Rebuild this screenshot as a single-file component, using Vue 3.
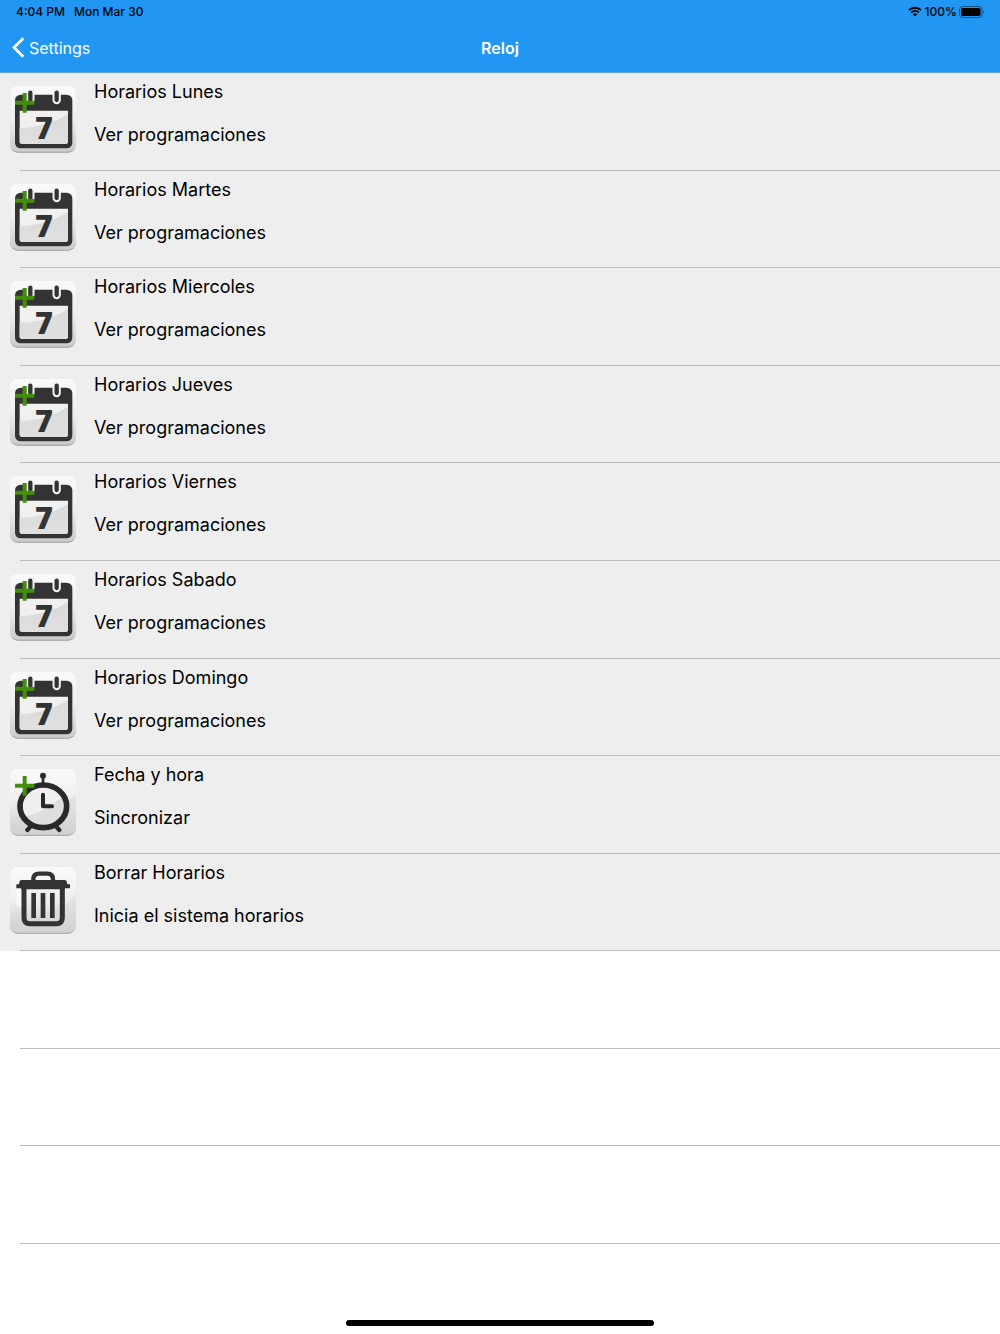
<script setup>
import { ref } from 'vue';

const days = ['Lunes', 'Martes', 'Miercoles', 'Jueves', 'Viernes', 'Sabado', 'Domingo'];

const items = ref([
  ...days.map((day) => ({
    icon: 'calendar',
    title: `Horarios ${day}`,
    detail: 'Ver programaciones',
  })),
  { icon: 'clock', title: 'Fecha y hora', detail: 'Sincronizar' },
  { icon: 'trash', title: 'Borrar Horarios', detail: 'Inicia el sistema horarios' },
]);

const emptyRows = 3;
</script>

<template>
  <div class="screen">
    <header class="header">
      <div class="status">
        <span>4:04 PM</span>
        <span>Mon Mar 30</span>
        <svg class="wifi" viewBox="0 0 14 11" width="14" height="11">
          <path d="M1 4.2 A8.6 8.6 0 0 1 13 4.2" />
          <path d="M3.2 6.5 A5.4 5.4 0 0 1 10.8 6.5" />
          <path class="dot" d="M4.9 8.3 A3 3 0 0 1 9.1 8.3 L7 10.5 Z" />
        </svg>
        <span class="percent">100%</span>
        <svg class="battery" viewBox="0 0 26 12" width="26" height="12">
          <rect class="shell" x="0.5" y="0.5" width="22.5" height="11" rx="3" />
          <rect x="2" y="2" width="19.5" height="8" rx="1.6" />
          <path class="tip" d="M24.2 4 Q26 6 24.2 8 Z" />
        </svg>
      </div>
      <nav class="navbar">
        <button class="back" type="button">
          <svg viewBox="0 0 13 21" width="13" height="21">
            <path d="M11.3 1.2 L2 10.5 L11.3 19.8" />
          </svg>
          <span>Settings</span>
        </button>
        <h1 class="title">Reloj</h1>
      </nav>
    </header>

    <svg class="defs" width="0" height="0" aria-hidden="true">
      <defs>
        <linearGradient id="tile" x1="0" y1="0" x2="0" y2="1">
          <stop offset="0" stop-color="#fafafa" />
          <stop offset="0.5" stop-color="#eeeeee" />
          <stop offset="1" stop-color="#cbcbcb" />
        </linearGradient>
        <linearGradient id="shine" x1="0" y1="0" x2="0" y2="1">
          <stop offset="0" stop-color="#dadada" />
          <stop offset="1" stop-color="#e0e0e0" />
        </linearGradient>
      </defs>
    </svg>

    <ul class="list">
      <li v-for="item in items" :key="item.title" class="row filled">
        <button class="cell" type="button">
          <svg class="icon" viewBox="0 0 198 201" width="66" height="67" aria-hidden="true">
            <rect x="1" y="4" width="196" height="196" rx="22" fill="#9b9b9b" />
            <rect x="0" y="0" width="198" height="197" rx="22" fill="url(#tile)" />

            <g v-if="item.icon === 'calendar'">
              <rect x="15" y="26" width="172" height="161" rx="17" fill="#333" />
              <path d="M29 74 H174 V166 Q174 174 166 174 H37 Q29 174 29 166 Z" fill="#f0f0f0" />
              <path d="M29 126 Q112 124 174 84 V166 Q174 174 166 174 H37 Q29 174 29 166 Z" fill="url(#shine)" />
              <path class="ring-edge" d="M61 20 V42 M140 20 V42" />
              <path class="ring" d="M61 20 V42 M140 20 V42" />
              <text class="seven" x="102" y="160" text-anchor="middle">7</text>
            </g>

            <g v-else-if="item.icon === 'clock'">
              <path d="M172 95 L198 78 V175 Q198 197 176 197 H22 Q0 197 0 175 V150 Z" fill="#d8d8d8" opacity="0.5" />
              <path class="leg" d="M62 172 L52 183 M138 172 L148 183" />
              <path class="stem" d="M99 46 V20" />
              <circle cx="99" cy="20" r="9" fill="#292929" />
              <ellipse cx="100" cy="112" rx="70" ry="64" fill="#efefef" />
              <path d="M38 142 Q110 134 160 78 A70 64 0 0 1 100 176 Q58 176 38 142 Z" fill="#dedede" />
              <ellipse class="dial" cx="100" cy="112" rx="70" ry="64" />
              <path class="hands" d="M99 77 V112 H126" />
            </g>

            <g v-else>
              <path d="M165 112 Q192 95 198 75 V175 Q198 197 176 197 H22 Q0 197 0 175 V160 Q100 150 165 112 Z" fill="#d8d8d8" opacity="0.5" />
              <path d="M18 66 V108 Q20 122 36 122 V66 Z" fill="#fff" opacity="0.6" />
              <path class="can" d="M42 58 V152 Q42 170 60 170 H139 Q157 170 157 152 V58" />
              <path class="handle" d="M70 42 V37 Q70 20 87 20 H112 Q129 20 129 37 V42" />
              <path d="M35 39 H164 Q171 39 172 52 H180 V64 H165 V67 H33 V64 H19 V52 H27 Q28 39 35 39 Z" fill="#333" />
              <path class="bars" d="M71 78 V153 M99 78 V153 M127 78 V153" />
            </g>

            <path v-if="item.icon !== 'trash'" class="plus" d="M15 50 H73 M44 21 V80" />
          </svg>
          <span class="texts">
            <span>{{ item.title }}</span>
            <span>{{ item.detail }}</span>
          </span>
        </button>
      </li>
      <li v-for="n in emptyRows" :key="n" class="row"></li>
    </ul>

    <div class="home"></div>
  </div>
</template>

<style>
body {
  margin: 0;
  background: #fff;
}
</style>

<style scoped>
.screen {
  display: flex;
  flex-direction: column;
  min-height: 100vh;
  font-family: Inter, "Liberation Sans", sans-serif;
  color: #000;
}

.header {
  display: flex;
  flex-direction: column;
  height: 73px;
  box-sizing: border-box;
  background: #2196f3;
  border-bottom: 1px solid #5ea5dc;
}

.status {
  display: flex;
  align-items: center;
  height: 23px;
  padding: 0 15px 0 16px;
  font-size: 12px;
  font-weight: 500;
}

.status span:nth-child(2) {
  margin-left: 9px;
}

.wifi {
  margin-left: auto;
  fill: none;
  stroke: #000;
  stroke-width: 1.8;
}

.wifi .dot {
  fill: #000;
  stroke: none;
}

.status .percent {
  margin: 0 2px 0 3px;
}

.shell {
  fill: none;
  stroke: #000;
  stroke-opacity: 0.45;
}

.tip {
  fill-opacity: 0.5;
}

.navbar {
  display: grid;
  grid-template-columns: 1fr auto 1fr;
  align-items: center;
  flex: 1;
  color: #fff;
}

.back {
  display: flex;
  align-items: center;
  gap: 4px;
  justify-self: start;
  padding: 0 0 0 12px;
  border: 0;
  background: none;
  color: inherit;
  font: inherit;
  font-size: 16px;
}

.back path {
  fill: none;
  stroke: #fff;
  stroke-width: 2.8;
}

.title {
  margin: 0;
  font-size: 16px;
  font-weight: 600;
}

.defs {
  display: block;
}

.list {
  display: grid;
  grid-auto-rows: 1fr;
  flex: 1;
  margin: 0;
  padding: 0;
  list-style: none;
}

.row {
  background: linear-gradient(#bcbcbc, #bcbcbc) right bottom / calc(100% - 20px) 1px no-repeat;
}

.filled {
  background-color: #eee;
}

.cell {
  display: flex;
  align-items: flex-start;
  gap: 18px;
  width: 100%;
  padding: 0 10px;
  border: 0;
  background: none;
  color: inherit;
  font: inherit;
  text-align: left;
}

.icon {
  flex: none;
  margin-top: 13px;
}

.texts {
  display: flex;
  flex-direction: column;
  gap: 19px;
  padding-top: 7px;
  font-size: 18px;
  line-height: 24px;
}

.ring-edge,
.ring {
  fill: none;
  stroke: #f5f5f5;
  stroke-width: 25;
  stroke-linecap: round;
}

.ring {
  stroke: #333;
  stroke-width: 13;
}

.seven {
  fill: #333;
  font-family: "Open Sans", sans-serif;
  font-size: 92px;
  font-weight: 800;
}

.plus {
  stroke: #438f0b;
  stroke-width: 12;
}

.dial {
  fill: none;
  stroke: #292929;
  stroke-width: 17;
}

.leg {
  stroke: #292929;
  stroke-width: 13;
  stroke-linecap: round;
}

.stem {
  stroke: #292929;
  stroke-width: 8;
}

.hands {
  fill: none;
  stroke: #292929;
  stroke-width: 12;
  stroke-linecap: round;
  stroke-linejoin: round;
}

.can,
.handle {
  fill: none;
  stroke: #333;
  stroke-width: 15;
}

.handle {
  stroke-width: 13;
}

.bars {
  stroke: #333;
  stroke-width: 14;
}

.home {
  width: 31%;
  max-width: 308px;
  height: 6px;
  margin: 76px auto 8px;
  border-radius: 3px;
  background: #000;
}
</style>
